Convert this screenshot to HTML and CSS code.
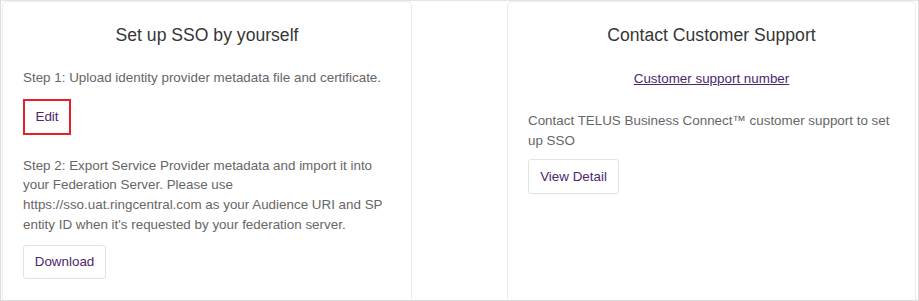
FILE: index.html
```html
<!DOCTYPE html>
<html lang="en">
<head>
    <meta charset="UTF-8">
    <title>SSO Setup</title>
    <link rel="stylesheet" href="styles.css">
</head>
<body>
    <div class="sso-frame">
        <div class="card card-self">
            <h2 class="card-title">Set up SSO by yourself</h2>
            <p class="step step-one">Step 1: Upload identity provider metadata file and certificate.</p>
            <button class="btn btn-edit">Edit</button>
            <p class="step step-two">Step 2: Export Service Provider metadata and import it into your Federation Server. Please use https://sso.uat.ringcentral.com as your Audience URI and SP entity ID when it's requested by your federation server.</p>
            <button class="btn btn-download">Download</button>
        </div>
        <div class="card card-support">
            <h2 class="card-title">Contact Customer Support</h2>
            <div class="support-link-row">
                <a class="support-link" href="#">Customer support number</a>
            </div>
            <p class="step support-text">Contact TELUS Business Connect™ customer support to set up SSO</p>
            <button class="btn btn-detail">View Detail</button>
        </div>
    </div>
</body>
</html>
```

FILE: styles.css
```css
body {
    margin: 0;
    font-family: 'Liberation Sans', Arial, sans-serif;
    background: #fff;
}
.sso-frame {
    box-sizing: border-box;
    width: 919px;
    height: 301px;
    border: 1px solid #dcdcdc;
    border-top-color: #e4e4e4;
    padding: 0 1px 0 1px;
    display: flex;
    gap: 95px;
    overflow: hidden;
}
.card {
    box-sizing: border-box;
    margin-top: 0;
    border: 1px solid #ebebeb;
    border-bottom: none;
    border-radius: 5px 5px 0 0;
    padding: 22px 20px 0 20px;
    height: 300px;
}
.card-self {
    width: 410px;
}
.card-support {
    width: 409px;
}
.card-title {
    margin: 0;
    font-size: 17.6px;
    line-height: 22px;
    font-weight: normal;
    color: #363636;
    text-align: center;
}
.step {
    margin: 0;
    font-size: 13.4px;
    line-height: 19.7px;
    color: #666;
}
.step-one {
    margin-top: 22px;
}
.btn {
    display: block;
    box-sizing: border-box;
    background: #fff;
    border: 1px solid #e3e3e3;
    border-radius: 3px;
    font-family: 'Liberation Sans', Arial, sans-serif;
    font-size: 13.4px;
    color: #4b286d;
    padding: 0;
    white-space: nowrap;
    text-align: center;
    cursor: pointer;
}
.btn-edit {
    margin-top: 11px;
    height: 36px;
    width: 48px;
    border: 2px solid #e5202a;
    border-radius: 0;
}
.step-two {
    margin-top: 21px;
}
.btn-download {
    margin-top: 10px;
    height: 34px;
    width: 83px;
}
.support-link-row {
    margin-top: 23px;
    text-align: center;
    font-size: 13.4px;
    line-height: 20px;
}
.support-link {
    color: #4b286d;
    text-decoration: underline;
}
.support-text {
    margin-top: 22px;
}
.btn-detail {
    margin-top: 9px;
    height: 35px;
    width: 91px;
}
```
